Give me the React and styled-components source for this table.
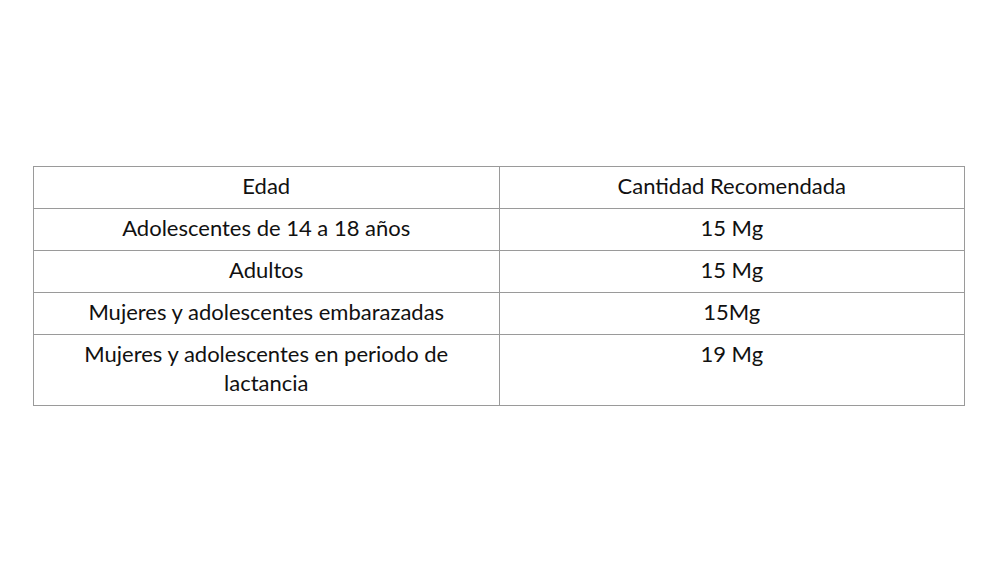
import styled, { createGlobalStyle } from "styled-components";

const GlobalStyle = createGlobalStyle`
  body {
    margin: 0;
    background: #ffffff;
    font-family: "Lato", "Open Sans", sans-serif;
  }
`;

const rows = [
  ["Adolescentes de 14 a 18 años", "15 Mg"],
  ["Adultos", "15 Mg"],
  ["Mujeres y adolescentes embarazadas", "15Mg"],
  ["Mujeres y adolescentes en periodo de lactancia", "19 Mg"],
];

export default function App() {
  return (
    <>
      <GlobalStyle />
      <StyledPage>
        <StyledTable>
          <colgroup>
            <col style={{ width: "50%" }} />
            <col style={{ width: "50%" }} />
          </colgroup>
          <thead>
            <tr>
              <StyledCell as="th">Edad</StyledCell>
              <StyledCell as="th">Cantidad Recomendada</StyledCell>
            </tr>
          </thead>
          <tbody>
            {rows.map(([age, amount]) => (
              <tr key={age}>
                <StyledCell>{age}</StyledCell>
                <StyledCell>{amount}</StyledCell>
              </tr>
            ))}
          </tbody>
        </StyledTable>
      </StyledPage>
    </>
  );
}

const StyledPage = styled.div`
  width: 1000px;
  height: 575px;
  box-sizing: border-box;
  padding: 166px 0 0 33px;
`;

const StyledTable = styled.table`
  width: 932px;
  border-collapse: collapse;
  table-layout: fixed;
  color: #111111;
`;

const StyledCell = styled.td`
  border: 1px solid #9a9a9a;
  padding: 4px 8px 8px;
  font-size: 22px;
  font-weight: 400;
  line-height: 29px;
  text-align: center;
  vertical-align: top;
`;
